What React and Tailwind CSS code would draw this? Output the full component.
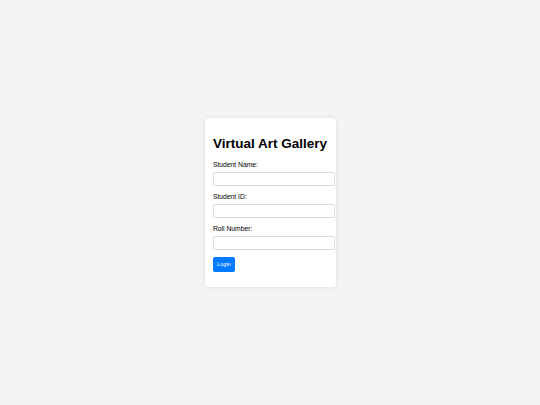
export default function App() {
  const fields = ["Student Name:", "Student ID:", "Roll Number:"];

  return (
    <div className="min-h-screen bg-[#f4f4f4] flex items-center justify-center font-['Liberation_Sans',Arial,sans-serif]">
      <div className="bg-white w-[131px] p-[8.4px] rounded-[4px] shadow-[0_0_4px_rgba(0,0,0,0.1)]">
        <h2 className="text-[13.5px] font-bold leading-[1.15] mt-[9px] mb-[10px] text-black whitespace-nowrap">
          Virtual Art Gallery
        </h2>
        <form onSubmit={(e) => e.preventDefault()}>
          {fields.map((label) => (
            <div key={label}>
              <label className="block text-[6.75px] leading-[1.15] mb-[3.5px] text-black">
                {label}
              </label>
              <input
                type="text"
                className="block w-[122px] h-[13.5px] mb-[7.2px] border border-[#dcdcdc] rounded-[2px] bg-white"
              />
            </div>
          ))}
          <button
            type="submit"
            className="block bg-[#007bff] text-white text-[5.6px] w-[22px] h-[15px] rounded-[2px] mb-[6.4px]"
          >
            Login
          </button>
        </form>
      </div>
    </div>
  );
}
